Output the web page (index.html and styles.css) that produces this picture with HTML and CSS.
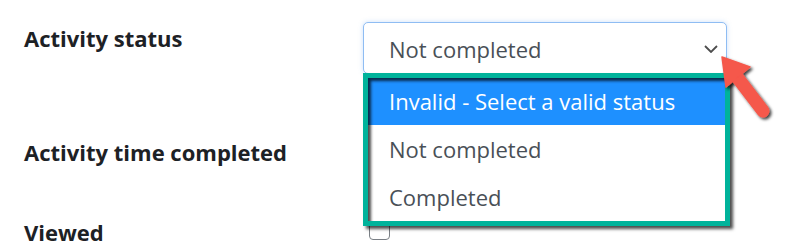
FILE: index.html
```html
<!DOCTYPE html>
<html>
<head>
<meta charset="utf-8">
<link rel="stylesheet" href="styles.css">
</head>
<body>
<div class="form">
  <div class="row row-status">
    <label class="lbl">Activity status</label>
    <div class="ctl">
      <div class="select">
        <span class="select-value">Not completed</span>
        <svg class="chev" width="14" height="8" viewBox="0 0 14 8"><polyline points="1,1 7,7 13,1" fill="none" stroke="#4d4d4d" stroke-width="1.8"/></svg>
      </div>
      <ul class="menu">
        <li class="opt opt-active">Invalid - Select a valid status</li>
        <li class="opt">Not completed</li>
        <li class="opt">Completed</li>
      </ul>
    </div>
  </div>
  <div class="row row-time">
    <label class="lbl">Activity time completed</label>
    <div class="ctl"></div>
  </div>
  <div class="row row-viewed">
    <label class="lbl">Viewed</label>
    <div class="ctl"><span class="checkbox"></span></div>
  </div>
</div>
<svg class="arrow" width="70" height="80" viewBox="0 0 70 80">
  <defs>
    <filter id="sh" x="-20%" y="-20%" width="150%" height="150%">
      <feDropShadow dx="2" dy="2" stdDeviation="1.5" flood-color="#000" flood-opacity="0.75"/>
    </filter>
  </defs>
  <g filter="url(#sh)" fill="#f5584b" stroke="#f5584b">
    <line x1="22" y1="27" x2="48" y2="61" stroke-width="13" stroke-linecap="round"/>
    <polygon points="7,7 35,17 11,37" stroke-width="1.5" stroke-linejoin="round"/>
  </g>
</svg>
</body>
</html>
```
FILE: styles.css
```css
html { overflow: hidden; }
body {
  margin: 0;
  background: #ffffff;
  font-family: "Open Sans", "Noto Sans", sans-serif;
  color: #1d2125;
}
.form {
  padding-top: 22px;
}
.row {
  display: grid;
  grid-template-columns: 339px 367px;
  padding-left: 24px;
  align-items: start;
}
.lbl {
  font-weight: 700;
  font-size: 22px;
  line-height: 30px;
  color: #1d2125;
}
.row-status .lbl { margin-top: 1px; }
.row-time { margin-top: 63px; }
.row-viewed { margin-top: 50px; }
.ctl {
  position: relative;
}
.select {
  box-sizing: border-box;
  width: 364px;
  height: 52px;
  border: 1px solid #8fbdf3;
  border-radius: 5px;
  box-shadow: 0 0 5px rgba(110, 165, 240, 0.35);
  padding: 0 8px 0 25px;
  display: flex;
  align-items: center;
  justify-content: space-between;
  font-size: 22px;
  line-height: 50px;
  color: #495057;
  background: #fff;
}
.select-value { padding-top: 2px; }
.chev { margin-top: 2px; }
.menu {
  position: absolute;
  top: 51px;
  left: 0;
  z-index: 1;
  width: 367px;
  box-sizing: border-box;
  margin: 0;
  padding: 0;
  list-style: none;
  border: 5px solid #00b39b;
  background: #fff;
  box-shadow: 3px 3px 3px rgba(0, 0, 0, 0.7);
}
.menu::after {
  content: "";
  position: absolute;
  inset: 0;
  box-shadow: inset 3px 3px 3px rgba(0, 0, 0, 0.7);
  pointer-events: none;
}
.opt {
  height: 48px;
  line-height: 48px;
  padding-left: 21px;
  font-size: 22px;
  color: #495057;
}
.opt-active {
  height: 47px;
  line-height: 47px;
  background: #1e90ff;
  color: #ffffff;
}
.checkbox {
  display: block;
  box-sizing: border-box;
  width: 21px;
  height: 21px;
  margin: 2px 0 0 6px;
  border: 1px solid #7a7f85;
  border-radius: 4px;
  background: #fff;
}
.arrow {
  position: absolute;
  left: 715px;
  top: 50px;
  z-index: 2;
}
```
